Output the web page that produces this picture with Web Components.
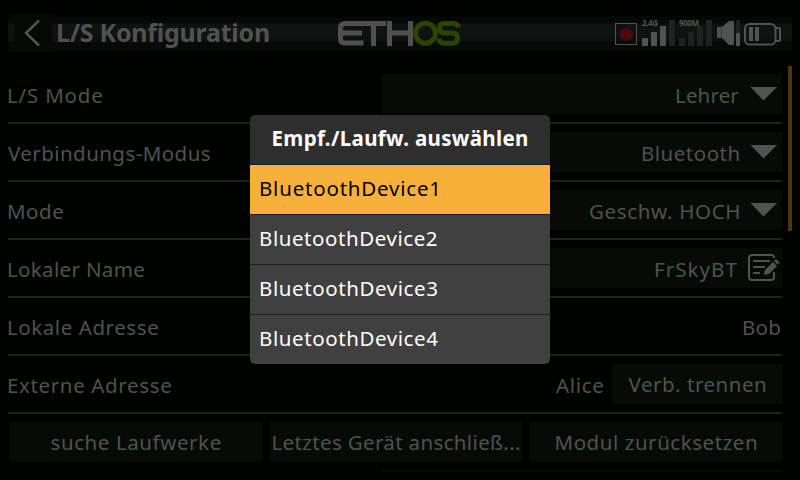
<!DOCTYPE html>
<html lang="de"><head><meta charset="utf-8"><title>L/S Konfiguration</title>
<style>
html,body{margin:0;width:800px;height:480px;overflow:hidden;background:#000200}
body{font:20.5px "Noto Sans","Open Sans",sans-serif;color:#50524f}
</style></head><body><ethos-screen></ethos-screen>
<script>
const define=(name,html,init)=>{
  const t=document.createElement('template');t.innerHTML=html;
  customElements.define(name,class extends HTMLElement{
    connectedCallback(){
      if(this.shadowRoot)return;
      this.attachShadow({mode:'open'}).append(t.content.cloneNode(true));
      if(init)init(this,this.shadowRoot);
    }
  });
};
const ctx=document.createElement('canvas').getContext('2d');

/* A run of text whose visible glyphs span exactly w pixels. */
customElements.define('fit-text',class extends HTMLElement{
  connectedCallback(){
    if(this.shadowRoot)return;
    const r=this.attachShadow({mode:'open'});
    r.innerHTML='<style>:host{display:block;flex:none;white-space:pre;line-height:28px;height:28px}span{display:block;width:max-content}</style><span></span>';
    const s=r.querySelector('span'),text=this.getAttribute('text'),w=+this.getAttribute('w');
    s.textContent=text;
    const cs=getComputedStyle(this),k=20;
    /* Measured at a multiple of the size, for sub-pixel side bearings. */
    ctx.font=`${cs.fontWeight} ${parseFloat(cs.fontSize)*k}px ${cs.fontFamily}`;
    const m=ctx.measureText(text);
    const left=Math.round(m.actualBoundingBoxLeft/k*.6),ink=left+m.actualBoundingBoxRight/k;
    s.style.letterSpacing=((w-ink-.3)/(text.length-1)).toFixed(3)+'px';
    s.style.marginLeft=left+'px';
    this.style.width=w+'px';
  }
});

define('status-icons',`<style>:host{display:block;width:170px;height:32px}svg{display:block}</style>
<svg width="170" height="32" viewBox="612 17 170 32">
<rect x="615.5" y="23.5" width="21" height="21" fill="none" stroke="#505351"/>
<circle cx="626.5" cy="34.5" r="6.5" fill="#4d0808"/>
<text x="642" y="26" textLength="16" font-family="Noto Sans" font-weight="700" font-size="8" fill="#505351">2.4G</text>
<g fill="#505351"><path d="M642 38h6v8h-6zM651 32h6v14h-6zM660 26h6v20h-6z"/><path d="M736 33h4v13h-4z"/></g>
<path fill="#1e2220" d="M669 20h6v26h-6zM679 38h6v8h-6zM688 32h6v14h-6zM697 26h6v20h-6zM706 20h6v26h-6zM736 20h4v13h-4z"/>
<text x="679" y="26" textLength="20" font-family="Noto Sans" font-weight="700" font-size="8" fill="#505351">900M</text>
<path fill="#505351" d="M718 27h4l7-6h4a1 1 0 0 1 1 1v22a1 1 0 0 1-1 1h-4l-7-7h-4a1 1 0 0 1-1-1V28a1 1 0 0 1 1-1z"/>
<path d="M721.5 28v10" stroke="#343735"/>
<g fill="none" stroke="#505351" stroke-width="2"><rect x="745" y="24" width="30.500" height="20.500" rx="4.500"/><path d="M776 28h3q1 0 1 1v11q0 1-1 1h-3"/></g>
<path fill="#505351" d="M749 27h4v14h-4zM755 27h4v14h-4z"/>
</svg>`);

define('ethos-logo',`<style>:host{display:block}svg{display:block}</style>
<svg width="126" height="28" viewBox="336 19 126 28" fill="none" stroke="#505050" stroke-width="5">
<path d="M386 23.500H345Q340.500 23.500 340.500 28V38.500Q340.500 43 345 43H363.500M341 33H362M373.500 24V46M389.500 21V46M410.500 21V46M389.500 33H410"/>
<g stroke="#2b4303"><circle cx="425.500" cy="33.300" r="10"/><path d="M458.500 27.500Q458 23.500 453 23.500H444Q439.500 23.500 439.500 28T444 33H453Q457.500 33 457.500 38T453 43.200H444Q439.500 43 438.500 38.500"/></g>
</svg>`);

define('title-bar',`<style>
:host{display:grid;grid-template-columns:38px 1fr auto auto;align-items:center;box-sizing:border-box;margin:0 8px;height:66px;padding:0 10px 0 6px;
background:linear-gradient(#000200 0 9px,#000 9px 14px,#040604 15px,#070a08 23px,#0f1211 24px,#101312 32px,#0d100e 41px,#070a08 42px,#060907 51px,#000 52px,#000 57px,#000200 58px)}
.back{width:38px;height:38px;background:#060a07}.back svg{display:block}
fit-text{font-size:25px;font-weight:700;margin:0 0 2px 5px}
ethos-logo{margin-right:150px}</style>
<div class="back"><svg width="38" height="38" fill="none" stroke="#505351" stroke-width="2.600"><path d="M25 6.500L12 19 25 31.500"/></svg></div>
<fit-text text="L/S Konfiguration" w="212"></fit-text><ethos-logo></ethos-logo><status-icons></status-icons>`);

define('setting-row',`<style>
:host{display:flex;box-sizing:border-box;height:58px;padding:8px 0;border-bottom:2px solid #1d211f;justify-content:space-between}
.label,::slotted(*){margin-top:7px}</style>
<slot></slot>`,(h,r)=>{
 const n=document.createElement('fit-text');
 n.className='label';n.setAttribute('text',h.getAttribute('label'));n.setAttribute('w',h.getAttribute('w'));
 r.querySelector('slot').before(n);
});

define('value-field',`<style>
:host{display:flex;box-sizing:border-box;width:400px;height:40px;margin-top:0!important;background:#070b08;justify-content:flex-end}
::slotted(fit-text){margin-top:7px}svg{flex:none;display:block}.edit{display:none}
:host([kind=edit]) .edit{display:block}:host([kind=edit]) .drop{display:none}</style>
<slot></slot>
<svg class="drop" width="43" height="40"><path fill="#505351" d="M11.500 13H38L24.500 26.500z"/></svg>
<svg class="edit" width="45" height="40" viewBox="737 248 45 40" fill="none" stroke="#505351" stroke-width="2">
<path d="M774 258v-1q0-2-3-2H752q-3 0-3 3v19q0 3 3 3H771q3 0 3-3v-5M753 261h17M753 267h12M753 273h7"/>
<path fill="#505351" stroke="none" d="M765 270l8-8 4 4-8 8-5 1zM774 261l2-2 3.500 3.500-2 2z"/></svg>`);

define('action-button',`<style>:host{display:flex;height:40px;background:#070b08;justify-content:center}::slotted(fit-text){margin-top:6px}</style><slot></slot>`);

define('picker-item',`<style>:host{display:block;box-sizing:border-box;height:50px;padding:9px 0 0 10px;border-bottom:1px solid #1e1e1e;background:#404040;color:#fff}
:host([selected]){background:#f8b03a;color:#000}:host(:last-of-type){border:0;height:49px}</style><slot></slot>`);

define('picker-dialog',`<style>:host{display:block;position:absolute;left:250px;top:115px;width:300px;border-radius:5px;overflow:hidden;color:#fff}
header{display:flex;justify-content:center;box-sizing:border-box;height:50px;padding-top:9px;background:#2f2e2f;border-bottom:1px solid #1e1e1e;font-weight:700}</style>
<header><slot name="title"></slot></header><slot></slot>`);

define('ethos-screen',`<style>
:host{display:block;position:relative;width:800px;height:480px;overflow:hidden}
.body{display:flex;gap:6px;padding-left:8px;height:406px}
main{width:774px}
.thumb{width:4px;height:165px;background:#523510}
.buttons{display:grid;grid-template-columns:repeat(3,252px);gap:8px;padding:8px 0 8px 2px}
.next{height:2px;width:400px;margin-left:auto;background:#070b08}
.remote{display:flex;gap:9px;margin-top:0}
.remote>fit-text{margin-top:7px}.remote action-button{width:170px}
</style>
<title-bar></title-bar>
<div class="body"><main>
<setting-row label="L/S Mode" w="94"><value-field><fit-text text="Lehrer" w="63"></fit-text></value-field></setting-row>
<setting-row label="Verbindungs-Modus" w="202"><value-field><fit-text text="Bluetooth" w="97"></fit-text></value-field></setting-row>
<setting-row label="Mode" w="55"><value-field><fit-text text="Geschw. HOCH" w="149"></fit-text></value-field></setting-row>
<setting-row label="Lokaler Name" w="136"><value-field kind="edit"><fit-text text="FrSkyBT" w="82"></fit-text></value-field></setting-row>
<setting-row label="Lokale Adresse" w="150"><fit-text text="Bob" w="37" style="margin-right:2px"></fit-text></setting-row>
<setting-row label="Externe Adresse" w="163"><div class="remote"><fit-text text="Alice" w="47"></fit-text><action-button><fit-text text="Verb. trennen" w="137"></fit-text></action-button></div></setting-row>
<div class="buttons"><action-button><fit-text text="suche Laufwerke" w="169"></fit-text></action-button><action-button><fit-text text="Letztes Gerät anschließ..." w="247"></fit-text></action-button><action-button><fit-text text="Modul zurücksetzen" w="201"></fit-text></action-button></div>
<div class="next"></div></main><div class="thumb"></div></div>
<picker-dialog><fit-text slot="title" text="Empf./Laufw. auswählen" w="255"></fit-text>
<picker-item selected><fit-text text="BluetoothDevice1" w="177"></fit-text></picker-item>
<picker-item><fit-text text="BluetoothDevice2" w="177"></fit-text></picker-item>
<picker-item><fit-text text="BluetoothDevice3" w="177"></fit-text></picker-item>
<picker-item><fit-text text="BluetoothDevice4" w="178"></fit-text></picker-item></picker-dialog>`);
</script></body></html>
